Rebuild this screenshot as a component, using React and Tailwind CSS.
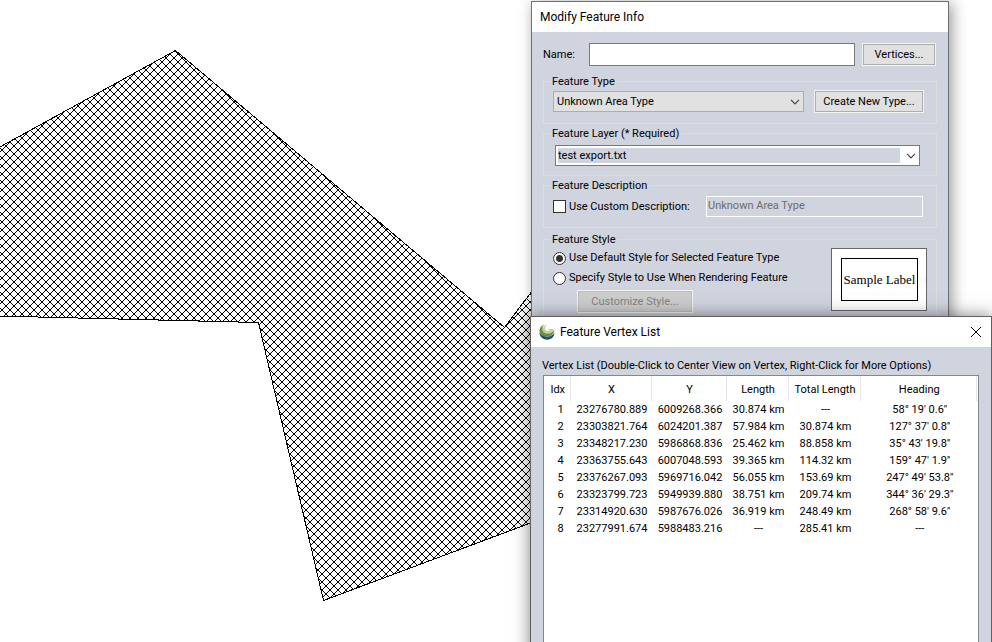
const rows = [
  ["1", "23276780.889", "6009268.366", "30.874 km", "---", "58° 19' 0.6''"],
  ["2", "23303821.764", "6024201.387", "57.984 km", "30.874 km", "127° 37' 0.8''"],
  ["3", "23348217.230", "5986868.836", "25.462 km", "88.858 km", "35° 43' 19.8''"],
  ["4", "23363755.643", "6007048.593", "39.365 km", "114.32 km", "159° 47' 1.9''"],
  ["5", "23376267.093", "5969716.042", "56.055 km", "153.69 km", "247° 49' 53.8''"],
  ["6", "23323799.723", "5949939.880", "38.751 km", "209.74 km", "344° 36' 29.3''"],
  ["7", "23314920.630", "5987676.026", "36.919 km", "248.49 km", "268° 58' 9.6''"],
  ["8", "23277991.674", "5988483.216", "---", "285.41 km", "---"],
];

const columns = [
  ["Idx", "w-[26px]"],
  ["X", "w-[81px]"],
  ["Y", "w-[75px]"],
  ["Length", "w-[62px]"],
  ["Total Length", "w-[72px]"],
  ["Heading", ""],
];

function Chevron({ className }) {
  return (
    <svg className={className} width="10" height="6" viewBox="0 0 10 6" fill="none" stroke="#444" strokeWidth="1.200" aria-hidden="true">
      <path d="M1 .8 5 4.8 9 .8" />
    </svg>
  );
}

function Group({ title, className, bodyClass, children }) {
  return (
    <fieldset className={`min-w-0 border border-[#dcdcdc] ${className}`}>
      <legend className="ml-[6px] h-4 px-[2px] leading-[18px]">{title}</legend>
      <div className={bodyClass}>{children}</div>
    </fieldset>
  );
}

function MapView() {
  return (
    <svg className="absolute inset-0" width="992" height="642" shapeRendering="crispEdges" role="img" aria-label="Area feature">
      <defs>
        <pattern id="hatch" x="2" y="6" width="8" height="8" patternUnits="userSpaceOnUse">
          <path
            d="M0 0h1v1h-1zM1 1h1v1h-1zM2 2h1v1h-1zM3 3h1v1h-1zM4 4h1v1h-1zM5 5h1v1h-1zM6 6h1v1h-1zM7 7h1v1h-1zM7 0h1v1h-1zM6 1h1v1h-1zM5 2h1v1h-1zM4 3h1v1h-1zM3 4h1v1h-1zM2 5h1v1h-1zM1 6h1v1h-1zM0 7h1v1h-1z"
          />
        </pattern>
      </defs>
      <path d="M-2 148 175.500 50.500 504.500 327.500 560 254V512L323.500 600.500 258.500 322.500 -2 316Z" fill="url(#hatch)" stroke="#000" />
    </svg>
  );
}

function Logo() {
  return (
    <svg width="16" height="16" viewBox="0 0 16 16" aria-hidden="true">
      <path d="M.3 8.200C.8 13 4 15.800 8.400 15.700c4.200-.1 6.900-3 7.100-7.200-1.500 4.500-11 6-15.200-.3Z" fill="#1d5270" />
      <path d="M5.500.5C2 1.600.2 4.300.5 7.200 1.200 11 4.600 12.800 8.500 12.600c4-.2 6.800-3.100 6.900-6.600-1.500 2.600-4 4-6.700 3.800C5 9.500 2.800 7 3.200 4.200 3.500 2.600 4.300 1.400 5.500.5Z" fill="#6c8f35" />
      <path d="M8.500.4C5.800.7 4 2.500 4 4.700c.1 2.400 2 4.100 4.700 4.200 2.600.1 4.800-1.300 6-3.900H9.300c.1 1 .8 1.500 1.800 1.500-1 .8-2.500.9-3.600.2C5.400 5.400 5.700 1.800 8.500.4Z" fill="#c3d29c" />
      <path d="M3.600 3.500c-.5 3 2 6.200 5.600 6 2.200-.1 4-1 5.500-3" fill="none" stroke="#91ac5c" strokeWidth="1" />
    </svg>
  );
}

const button = "border border-[#adadad] bg-[#e1e1e1] outline outline-1 outline-[#f4f4f4] h-[21px] text-center";

function FeatureInfo() {
  return (
    <section className="absolute left-[531px] top-px w-[418px] border border-[#707070] bg-[#d0d4de] shadow-[3px_2px_14px_rgba(0,0,0,0.4)]">
      <header className="h-[30px] bg-white px-2 font-[Roboto,sans-serif] text-[12px] leading-[30px]">Modify Feature Info</header>
      <form className="px-[11px] pt-[11px]">
        <div className="flex items-center">
          <label htmlFor="name" className="w-[46px] leading-[18px]">Name:</label>
          <input id="name" className="h-[23px] min-w-0 flex-1 border border-[#7a7a7a] bg-white px-1" />
          <button type="button" className={`ml-2 mr-[2px] w-[72px] pt-px ${button}`}>Vertices...</button>
        </div>
        <Group title="Feature Type" className="mt-[7px] h-[51px]" bodyClass="pl-[9px] pr-3 pt-[2px]">
          <div className="flex items-center">
            <div className="relative h-[21px] flex-1">
              <select aria-label="Feature Type" className="h-full w-full appearance-none border border-[#adadad] bg-[#e1e1e1] px-[3px] pt-px">
                <option>Unknown Area Type</option>
              </select>
              <Chevron className="pointer-events-none absolute right-[4px] top-[8px]" />
            </div>
            <button type="button" className={`ml-[11px] mr-px w-[108px] pt-px ${button}`}>Create New Type...</button>
          </div>
        </Group>
        <Group title="Feature Layer (* Required)" className="mt-px h-[51px]" bodyClass="pl-[11px] pr-4 pt-1">
          <div className="relative h-[21px] border border-[#7a7a7a] bg-white p-[2px] pr-[19px]">
            <select aria-label="Feature Layer" className="block h-full w-full appearance-none bg-[#d0d4de] pt-px leading-[14px]">
              <option>test export.txt</option>
            </select>
            <Chevron className="pointer-events-none absolute right-[3px] top-[7px]" />
          </div>
        </Group>
        <Group title="Feature Description" className="mt-px h-[51px]" bodyClass="pl-[9px] pr-[13px] pt-[3px]">
          <div className="flex items-center">
            <input id="custom" type="checkbox" className="size-[13px] appearance-none border border-[#333] bg-white" />
            <label htmlFor="custom" className="ml-[3px] flex-1 leading-[18px]">Use Custom Description:</label>
            <input aria-label="Description" disabled defaultValue="Unknown Area Type" className="h-[21px] w-[217px] border border-white bg-[#d0d4de] px-px pb-[3px] text-[#6d6d6d] outline outline-1 outline-[#d4d4d4]" />
          </div>
        </Group>
        <Group title="Feature Style" className="mt-[3px] h-[110px]" bodyClass="pl-[9px] pr-[9px]">
          <div className="flex">
            <div className="flex-1 pt-px">
              <div className="flex h-5 items-center gap-[3px]">
                <input id="default" type="radio" name="style" defaultChecked className="size-[13px] appearance-none rounded-full border border-[#333] bg-white checked:bg-[radial-gradient(circle,#333_3px,#fff_4px)]" />
                <label htmlFor="default" className="leading-[18px]">Use Default Style for Selected Feature Type</label>
              </div>
              <div className="flex h-5 items-center gap-[3px]">
                <input id="specify" type="radio" name="style" className="size-[13px] appearance-none rounded-full border border-[#333] bg-white checked:bg-[radial-gradient(circle,#333_3px,#fff_4px)]" />
                <label htmlFor="specify" className="leading-[18px]">Specify Style to Use When Rendering Feature</label>
              </div>
              <button type="button" disabled className="ml-[25px] mt-[3px] block h-[21px] w-[114px] border border-[#bfbfbf] bg-[#cccccc] pt-px text-[#838383] outline outline-1 outline-[#f4f4f4]">Customize Style...</button>
            </div>
            <div className="mt-px h-[63px] w-24 border border-[#666] bg-white p-[9px] pr-2">
              <div className="h-full w-full whitespace-nowrap border border-black text-center font-['Liberation_Serif',serif] text-[13px] leading-[42px]">Sample Label</div>
            </div>
          </div>
        </Group>
      </form>
    </section>
  );
}

function VertexList() {
  return (
    <section className="absolute -bottom-6 left-[530px] right-0 top-[316px] flex flex-col border border-[#606060] bg-[#d0d4de] shadow-[0_0_16px_rgba(0,0,0,0.5)]">
      <header className="flex h-[30px] items-center bg-white pl-2 pr-[9px]">
        <Logo />
        <h1 className="ml-[5px] flex-1 font-[Roboto,sans-serif] text-[12px]">Feature Vertex List</h1>
        <button type="button" aria-label="Close">
          <svg width="12" height="12" viewBox="0 0 12 12" stroke="#000" strokeWidth="1" fill="none"><path d="m1 1 10 10M11 1 1 11" /></svg>
        </button>
      </header>
      <p className="pl-[11px] pt-[11px] leading-4">Vertex List (Double-Click to Center View on Vertex, Right-Click for More Options)</p>
      <div className="mx-3 mt-px flex-1 border border-[#828790] bg-white pr-px">
        <table className="w-full table-fixed border-collapse text-center">
          <thead>
            <tr className="h-[25px]">
              {columns.map(([name, width]) => (
                <th key={name} className={`border-r border-[#e5e5e5] p-0 pl-[2px] pt-[2px] font-normal whitespace-nowrap ${width}`}>{name}</th>
              ))}
            </tr>
          </thead>
          <tbody>
            {rows.map((row) => (
              <tr key={row[0]} className="h-[17px]">
                {row.map((cell, i) => (
                  <td key={i} className={`p-0 pt-px leading-4 whitespace-nowrap ${i === 0 ? "pl-[7px]" : "pl-[3px]"}`}>{cell}</td>
                ))}
              </tr>
            ))}
          </tbody>
        </table>
      </div>
    </section>
  );
}

export default function App() {
  return (
    <main className="relative h-screen overflow-hidden bg-white font-[Roboto,'Liberation_Sans',sans-serif] text-[11px] leading-4 text-black">
      <MapView />
      <FeatureInfo />
      <VertexList />
    </main>
  );
}
